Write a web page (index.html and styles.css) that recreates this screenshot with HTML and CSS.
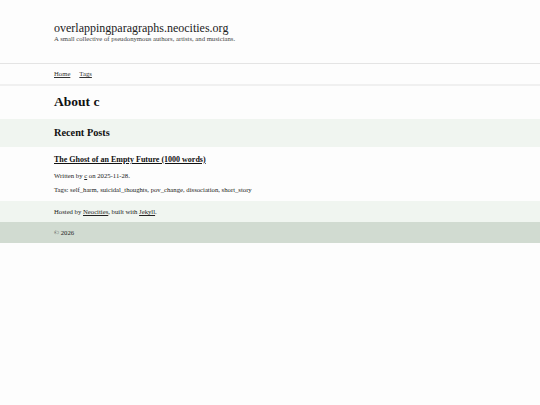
FILE: index.html
```html
<!DOCTYPE html>
<html>
<head>
<meta charset="utf-8">
<link rel="stylesheet" href="styles.css">
</head>
<body>
<header class="site-header">
  <div class="wrap">
    <div class="site-title">overlappingparagraphs.neocities.org</div>
    <div class="site-desc">A small collective of pseudonymous authors, artists, and musicians.</div>
  </div>
</header>
<nav class="site-nav">
  <div class="wrap nav-links">
    <a href="#">Home</a>
    <a href="#">Tags</a>
  </div>
</nav>
<main>
  <section class="page-title">
    <div class="wrap"><h1>About c</h1></div>
  </section>
  <section class="band">
    <div class="wrap"><h2>Recent Posts</h2></div>
  </section>
  <section class="posts">
    <div class="wrap">
      <h3><a href="#">The Ghost of an Empty Future (1000 words)</a></h3>
      <p class="meta">Written by <a href="#">c</a> on 2025-11-28.</p>
      <p class="meta">Tags: self_harm, suicidal_thoughts, pov_change, dissociation, short_story</p>
    </div>
  </section>
</main>
<footer>
  <div class="foot-a"><div class="wrap">Hosted by <a href="#">Neocities</a>, built with <a href="#">Jekyll</a>.</div></div>
  <div class="foot-b"><div class="wrap">© 2026</div></div>
</footer>
</body>
</html>
```
FILE: styles.css
```css
html, body {
  margin: 0;
  padding: 0;
  background: #fdfdfd;
  color: #222;
  font-family: "Liberation Serif", "Times New Roman", serif;
}
a { color: #222; text-decoration: underline; }
.wrap { padding-left: 54px; padding-right: 54px; }
.site-header {
  padding: 21px 0 20px;
  border-bottom: 1px solid #e4e4e4;
}
.site-title { font-size: 12px; line-height: 14px; color: #222; }
.site-desc { font-size: 6.7px; line-height: 8px; color: #444; }
.site-nav {
  border-bottom: 2px solid #f0f0f0;
}
.nav-links {
  display: flex;
  gap: 9px;
  font-size: 6.7px;
  line-height: 20px;
}
.nav-links a { color: #333; }
.page-title { padding: 6px 0 7px; }
h1 { margin: 0; font-size: 13.5px; line-height: 20px; font-weight: bold; color: #111; }
.band { background: #f0f5f0; }
h2 { margin: 0; font-size: 10.3px; line-height: 28px; font-weight: bold; color: #111; }
.posts { padding: 6px 0 4px; }
h3 { margin: 0; font-size: 8px; line-height: 14px; font-weight: bold; }
h3 a { color: #111; }
.meta { margin: 0; font-size: 6.7px; line-height: 14px; color: #222; }
.posts h3 + .meta { margin-top: 2px; }
.foot-a { background: #f0f5f0; font-size: 6.7px; line-height: 21px; color: #222; }
.foot-b { background: #d1dbd1; font-size: 6.7px; line-height: 21px; color: #222; }
```
